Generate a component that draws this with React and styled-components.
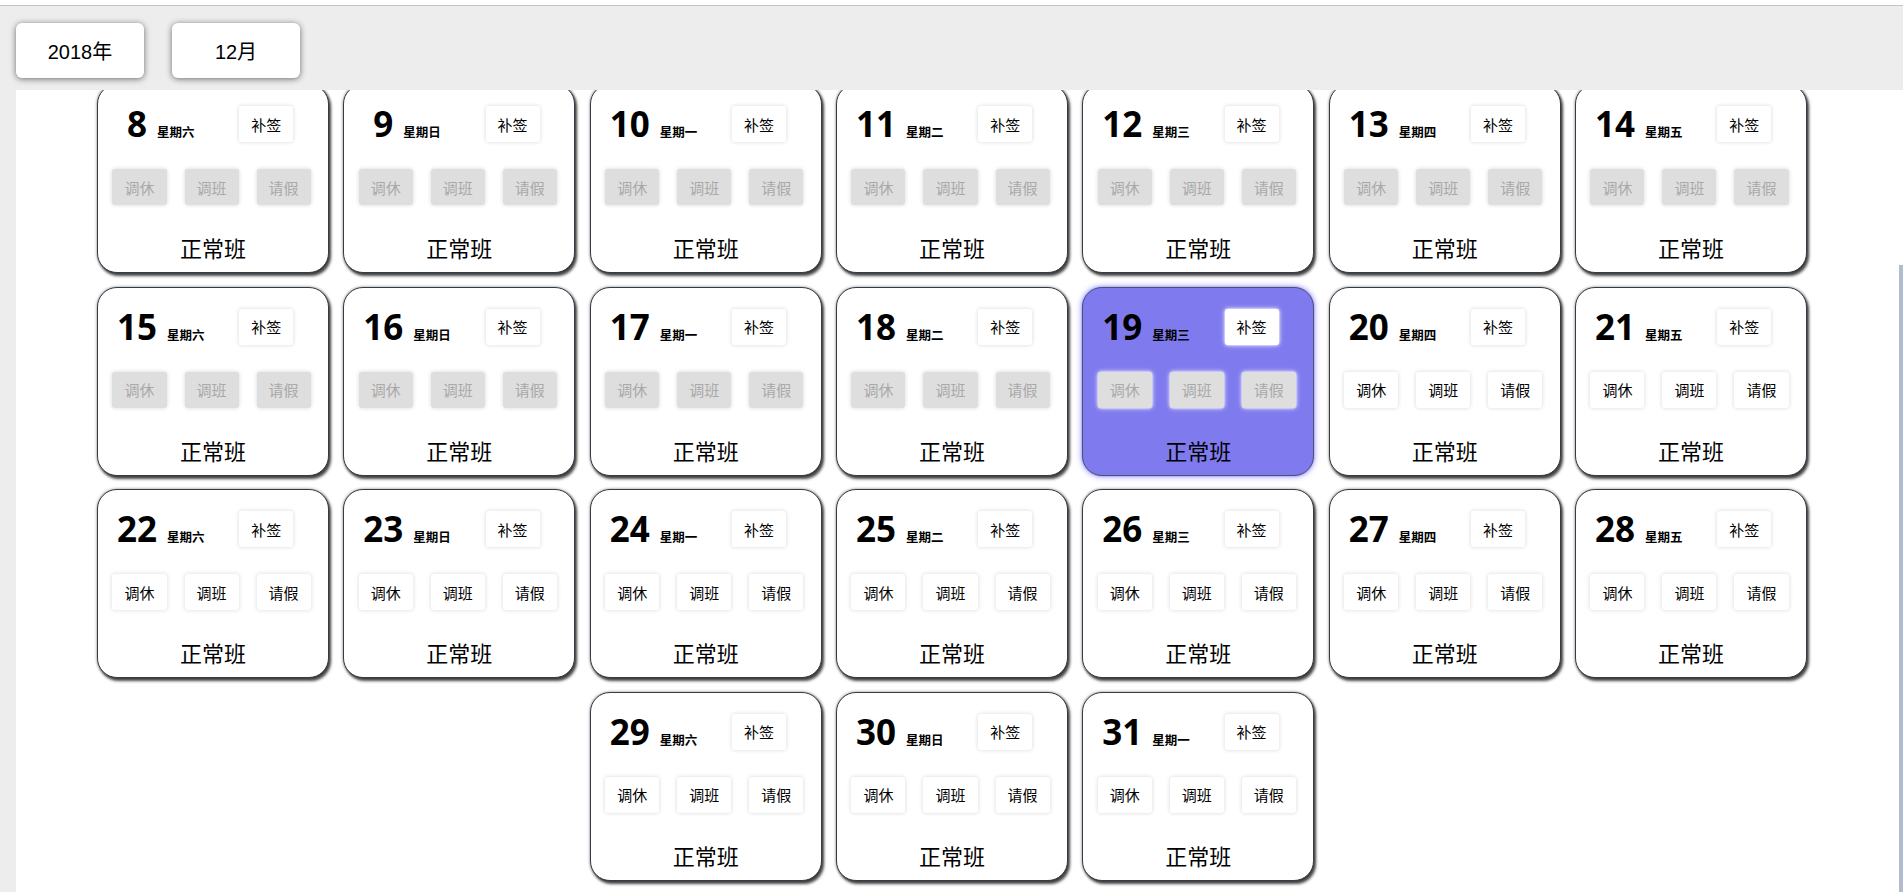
import React from "react";
import styled, { createGlobalStyle, css } from "styled-components";

const GlobalStyle = createGlobalStyle`
  html, body {
    margin: 0;
    padding: 0;
  }
  body {
    background: #ededed;
    font-family: "Noto Sans CJK SC", "Noto Sans", sans-serif;
    overflow: hidden;
  }
`;

const WEEK = ["星期日", "星期一", "星期二", "星期三", "星期四", "星期五", "星期六"];
const TODAY = 19;

// December 2018, from the 8th
const days = [];
for (let d = 8; d <= 31; d++) {
  days.push({ day: d, week: WEEK[new Date(2018, 11, d).getDay()] });
}

function App() {
  return (
    <>
      <GlobalStyle />
      <TopLine />
      <Header>
        <PickButton>2018年</PickButton>
        <PickButton>12月</PickButton>
      </Header>
      <Content>
        <Grid>
          {days.map(({ day, week }) => (
            <DayCard key={day} day={day} week={week} />
          ))}
        </Grid>
      </Content>
      <ScrollThumb />
    </>
  );
}

function DayCard({ day, week }) {
  const today = day === TODAY;
  const past = day <= TODAY;
  return (
    <Card $today={today}>
      <TopRow>
        <Half>
          <DateNum>{day}</DateNum>
          <Week>{week}</Week>
        </Half>
        <Half>
          <SmallButton $glow={today}>补签</SmallButton>
        </Half>
      </TopRow>
      <Actions>
        {["调休", "调班", "请假"].map((t) => (
          <SmallButton key={t} $disabled={past} $glow={today}>
            {t}
          </SmallButton>
        ))}
      </Actions>
      <Shift>正常班</Shift>
    </Card>
  );
}

const TopLine = styled.div`
  height: 5px;
  background: #fff;
  border-bottom: 1px solid #c4c4c4;
`;

const Header = styled.header`
  position: relative;
  z-index: 2;
  display: flex;
  gap: 28px;
  padding: 17px 16px 12px;
  background: #ededed;
`;

const PickButton = styled.div`
  width: 128px;
  height: 55px;
  display: flex;
  align-items: center;
  justify-content: center;
  background: #fff;
  border-radius: 6px;
  box-shadow: 0 1px 6px rgba(0, 0, 0, 0.55);
  font-family: "Liberation Sans", "Noto Sans CJK SC", sans-serif;
  font-size: 20px;
  color: #000;
`;

const Content = styled.main`
  display: flow-root;
  margin-left: 16px;
  background: #fff;
  height: calc(100vh - 90px);
`;

const Grid = styled.div`
  position: relative;
  z-index: 1;
  width: calc(100% - 15px);
  margin-top: -6px;
  display: flex;
  flex-wrap: wrap;
  justify-content: center;
  gap: 13.5px 14.33px;
`;

const Card = styled.div`
  box-sizing: border-box;
  width: 232px;
  height: 189px;
  padding-top: 21px;
  border: 1px solid #323d47;
  border-radius: 20px;
  background: #fff;
  box-shadow: 0 0 3px rgba(0, 0, 0, 0.5), 2px 3px 3px rgba(0, 0, 0, 0.7);
  ${(p) =>
    p.$today &&
    css`
      background: #7f7aee;
      border-color: #4d5270;
      box-shadow: 0 0 6px #8a85ff, 0 0 2px #8a85ff;
    `}
`;

const TopRow = styled.div`
  display: flex;
  align-items: center;
  height: 36px;
  padding: 0 9px 0 10px;
`;

const Half = styled.div`
  flex: 1;
  display: flex;
  align-items: baseline;
  justify-content: center;
`;

const DateNum = styled.span`
  font-family: "Noto Sans", sans-serif;
  font-weight: 700;
  font-size: 35px;
  line-height: 36px;
  color: #000;
`;

const Week = styled.span`
  margin-left: 10px;
  font-family: "Noto Sans CJK SC", sans-serif;
  font-weight: 700;
  font-size: 12.5px;
  color: #000;
`;

const SmallButton = styled.div`
  box-sizing: border-box;
  height: 36px;
  padding: 0 12px;
  display: flex;
  align-items: center;
  justify-content: center;
  border-radius: 3px;
  background: #fff;
  color: #000;
  font-size: 15px;
  box-shadow: 0 0 4px rgba(0, 0, 0, 0.16);
  ${(p) =>
    p.$disabled &&
    css`
      background: #dedede;
      color: #a9a9a9;
    `}
  ${(p) =>
    p.$glow &&
    css`
      box-shadow: 0 0 5px #fff, 0 0 2px #fff;
    `}
`;

const Actions = styled.div`
  display: flex;
  justify-content: center;
  gap: 18px;
  margin-top: 27px;
  padding-right: 3px;
`;

const Shift = styled.div`
  margin-top: 27px;
  text-align: center;
  font-size: 22px;
  line-height: 30px;
  color: #000;
`;

const ScrollThumb = styled.div`
  position: fixed;
  right: 0;
  top: 265px;
  bottom: 0;
  width: 4px;
  background: #b1bdcc;
`;

export default App;
